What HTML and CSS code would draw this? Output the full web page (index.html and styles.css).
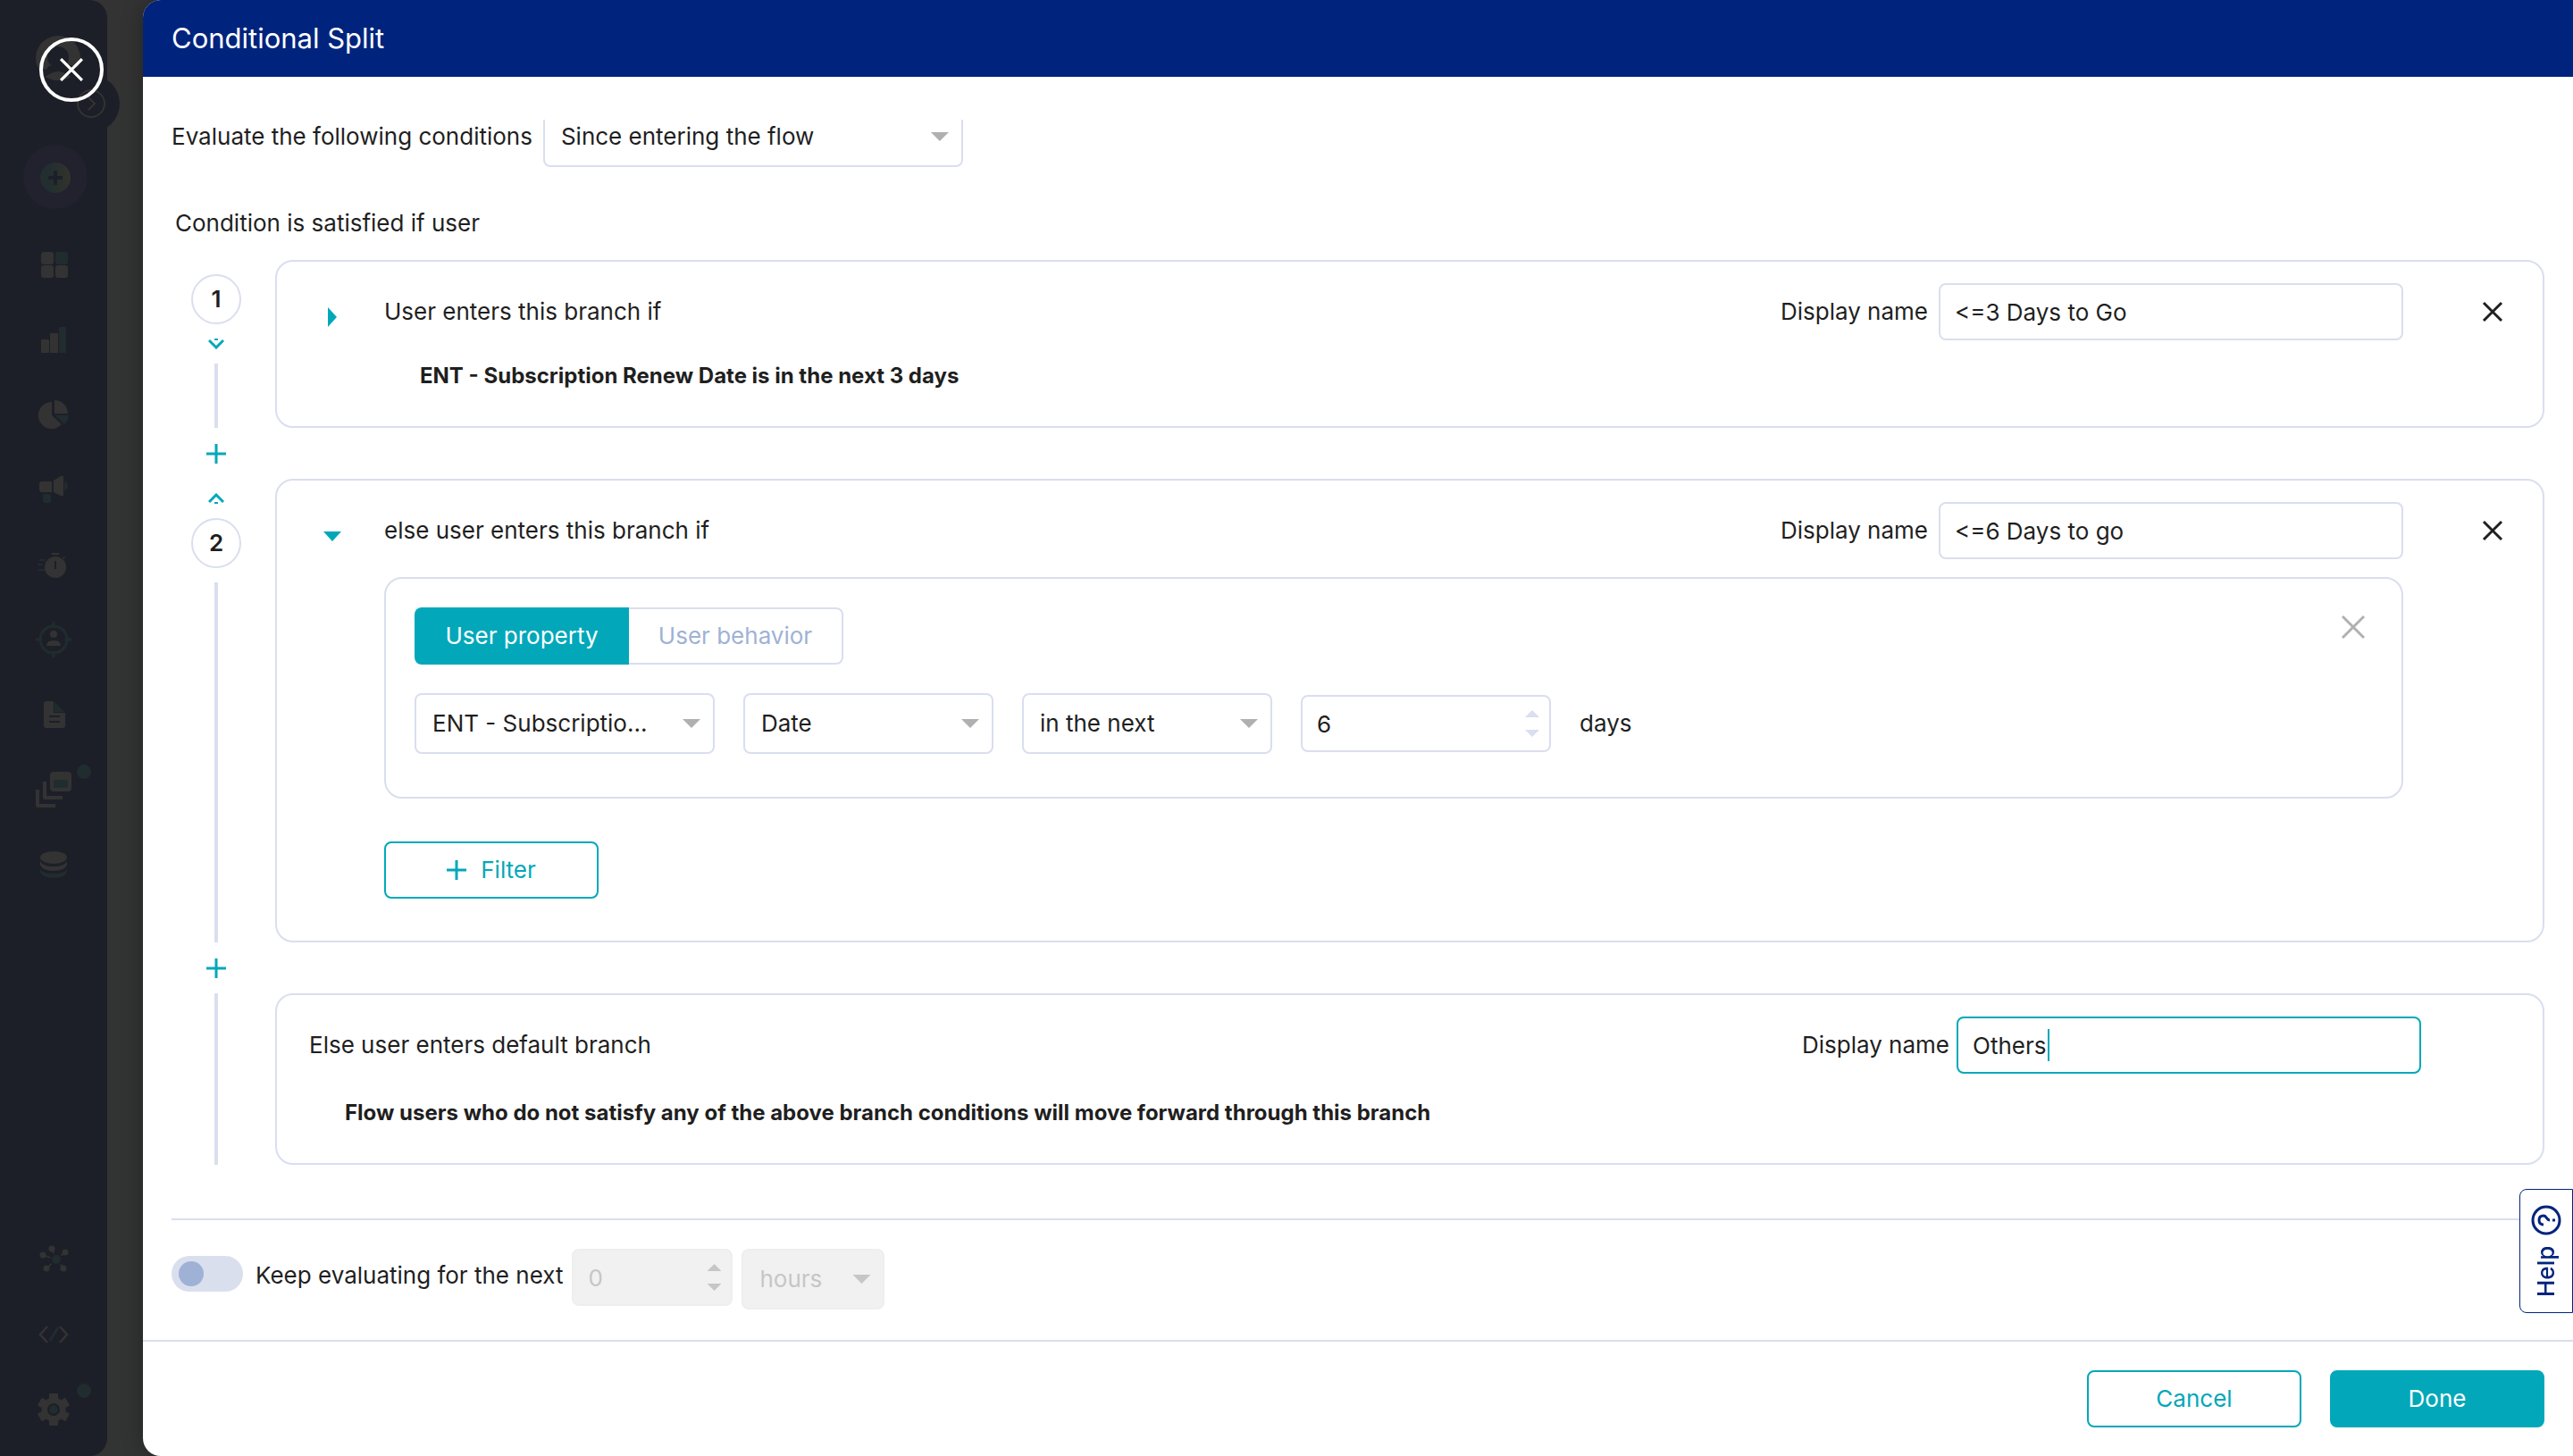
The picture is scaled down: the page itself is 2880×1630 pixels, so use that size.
FILE: index.html
```
<!DOCTYPE html>
<html lang="en">
<head>
<meta charset="UTF-8" />
<meta name="viewport" content="width=device-width, initial-scale=1" />
<title>Conditional Split</title>
<link rel="stylesheet" href="styles.css">
</head>
<body>
  <nav class="sidebar" aria-label="Main">
    <div class="brand">
      <svg viewBox="0 0 50 50"><circle class="g" cx="25" cy="25" r="25"/><circle class="d" cx="25" cy="24" r="12"/><path class="d" d="M0 37 Q10 40 14 36 L11 46 L2 42Z"/><path class="d" d="M11 46 Q25 34 39 46 Q46 42 48 36 L36 32 L14 34Z"/><path class="g" d="M11 46 Q25 36 39 46 Q25 54 11 46Z"/></svg>
    </div>
    <div class="expand">
      <svg viewBox="0 0 64 64"><circle cx="32" cy="32" r="15"/><path d="M29 25l7 7-7 7"/></svg>
    </div>
    <a href="#" class="create" aria-label="Create">
      <svg viewBox="0 0 72 72">
        <defs><linearGradient id="mix"><stop offset=".3" stop-color="#222e30"/><stop offset="1" stop-color="#32332c"/></linearGradient></defs>
        <circle cx="36" cy="36" r="36" fill="#21222e"/><circle cx="36" cy="37" r="17" fill="url(#mix)"/>
        <path d="M28 37h16M36 29v16" stroke="#1d1f28" stroke-width="4"/>
      </svg>
    </a>
    <a href="#" class="nav-item" aria-label="Overview">
      <svg viewBox="0 0 48 48"><rect class="g" x="10" y="10" width="14" height="14" rx="3"/><rect class="t" x="26" y="10" width="14" height="14" rx="3"/><rect class="g" x="10" y="25" width="14" height="14" rx="3"/><rect class="g" x="26" y="25" width="14" height="14" rx="3"/></svg>
    </a>
    <a href="#" class="nav-item" aria-label="Analytics">
      <svg viewBox="0 0 48 48"><rect class="g" x="10" y="24" width="9" height="15" rx="1"/><rect class="g" x="20" y="17" width="9" height="22" rx="1"/><rect class="t" x="30" y="10" width="8" height="29" rx="1"/></svg>
    </a>
    <a href="#" class="nav-item" aria-label="Segments">
      <svg viewBox="0 0 48 48"><path class="g" d="M22 25V10A15 15 0 1 0 33 35Z"/><path class="g" d="M25 23V8A15 15 0 0 1 40 23Z"/><path class="t" d="M26 25H41A15 15 0 0 1 36 35Z"/></svg>
    </a>
    <a href="#" class="nav-item" aria-label="Campaigns">
      <svg viewBox="0 0 48 48"><path class="g" d="M11 15H22V27H11Q8 27 8 24V18Q8 15 11 15Z"/><path class="g" d="M24 14L32 9Q35 8 35 10V30Q35 32 32 31L24 27Z"/><path class="t" d="M36 15Q40 16 40 20T36 25Z"/><rect class="t" x="12" y="29" width="9" height="10" rx="2"/></svg>
    </a>
    <a href="#" class="nav-item" aria-label="Live">
      <svg viewBox="0 0 48 48"><circle class="g" cx="26" cy="27" r="12"/><path class="g" d="M22 11h8v2h-8zM34 17l2-2 1 1-2 2z"/><path class="d" d="M25 20h2v9h-2z"/><path class="t" d="M8 18h6v2H8zM6 23h6v2H6zM7 29h7v2H7z"/></svg>
    </a>
    <a href="#" class="nav-item" aria-label="Users">
      <svg viewBox="0 0 48 48"><circle cx="24" cy="24" r="15" fill="none" stroke="#202c2e" stroke-width="3"/><path d="M24 4v7M24 37v7M4 24h7M37 24h7" stroke="#202c2e" stroke-width="3"/><circle class="g" cx="24" cy="18" r="4"/><path class="g" d="M16 31Q16 25 24 25T32 31Z"/></svg>
    </a>
    <a href="#" class="nav-item" aria-label="Reports">
      <svg viewBox="0 0 48 48"><path class="g" d="M16 9H24V22H37V36Q37 39 34 39H16Q13 39 13 36V12Q13 9 16 9Z"/><path class="t" d="M25 10L36 21H25Z"/><path class="d" d="M19 25h12v2H19zM19 31h12v2H19z"/></svg>
    </a>
    <a href="#" class="nav-item" aria-label="Catalogs">
      <svg viewBox="0 0 48 48"><rect class="g" x="20" y="4" width="24" height="22" rx="4"/><rect class="t" x="24" y="13" width="16" height="9"/><path d="M14 15V33H34M6 24V42H26" fill="none" stroke="#333" stroke-width="4" stroke-linejoin="round"/></svg>
      <span class="dot"></span>
    </a>
    <a href="#" class="nav-item" aria-label="Data">
      <svg viewBox="0 0 48 48"><ellipse class="g" cx="24" cy="16" rx="15" ry="7"/><path class="g" d="M9 20Q12 26 24 26T39 20V24Q37 31 24 31T9 24Z"/><path class="t" d="M9 29Q12 34 24 34T39 29V32Q37 39 24 39T9 32Z"/></svg>
    </a>
    <a href="#" class="nav-item nav-bottom" aria-label="Integrations">
      <svg viewBox="0 0 48 48"><path d="M12 20L27 25L22 13M37 17L27 25L16 35M27 25L35 35" fill="none" stroke="#333" stroke-width="1.5"/><circle class="d" cx="27" cy="25" r="7"/><circle class="t" cx="27" cy="25" r="5"/><circle class="g" cx="12" cy="20" r="3.5"/><circle class="g" cx="22" cy="13" r="3.5"/><circle class="g" cx="37" cy="17" r="3.5"/><circle class="g" cx="16" cy="35" r="3.5"/><circle class="g" cx="35" cy="35" r="3.5"/></svg>
    </a>
    <a href="#" class="nav-item" aria-label="Developers">
      <svg viewBox="0 0 48 48"><path d="M17 16L9 25L17 34M31 16L39 25L31 34" fill="none" stroke="#333" stroke-width="2.5"/><path d="M29 17L20 32" stroke="#202c2e" stroke-width="3"/></svg>
    </a>
    <a href="#" class="nav-item" aria-label="Settings">
      <svg viewBox="0 0 48 48"><g fill="#333"><circle cx="24" cy="25" r="13.5"/><rect id="tooth" x="19" y="7" width="10" height="36" rx="1"/><use href="#tooth" transform="rotate(60 24 25)"/><use href="#tooth" transform="rotate(120 24 25)"/></g><circle class="d" cx="24" cy="25" r="7"/><circle class="t" cx="24" cy="25" r="5"/></svg>
      <span class="dot"></span>
    </a>
  </nav>

  <button class="close" aria-label="Close">
    <svg viewBox="0 0 24 24"><path d="M1 1l22 22M23 1L1 23"/></svg>
  </button>

  <main class="panel">
    <header class="panel-header"><h1>Conditional Split</h1></header>

    <div class="panel-body">
      <div class="evaluate">
        <label for="window">Evaluate the following conditions</label>
        <span class="select select-lg"><select id="window"><option>Since entering the flow</option></select></span>
      </div>

      <p class="intro">Condition is satisfied if user</p>

      <section class="branch">
        <div class="rail">
          <span class="step">1</span>
          <button class="move" aria-label="Move down"><svg viewBox="0 0 18 12"><path d="M1 2l8 8 8-8"/><path class="dash" d="M7 1h4"/></svg></button>
          <span class="line"></span>
        </div>
        <div class="card">
          <div class="card-head">
            <button class="toggler" aria-label="Expand"><svg width="22" height="22" viewBox="0 0 22 22"><path d="M6 0l10 11-10 11z"/></svg></button>
            <h2>User enters this branch if</h2>
            <label for="name1">Display name</label>
            <input class="field name" id="name1" type="text" value="&lt;=3 Days to Go">
            <button class="remove" aria-label="Remove branch"><svg viewBox="0 0 24 24"><path d="M2 2l20 20M22 2L2 22"/></svg></button>
          </div>
          <p class="summary">ENT - Subscription Renew Date is in the next 3 days</p>
        </div>
      </section>

      <div class="connector"><button class="add" aria-label="Add branch"><svg viewBox="0 0 22 22"><path d="M11 0v22M0 11h22"/></svg></button></div>

      <section class="branch">
        <div class="rail">
          <button class="move" aria-label="Move up"><svg viewBox="0 0 18 12"><path d="M1 10l8-8 8 8"/><path class="dash" d="M7 11h4"/></svg></button>
          <span class="step">2</span>
          <span class="line"></span>
        </div>
        <div class="card">
          <div class="card-head">
            <button class="toggler" aria-label="Collapse"><svg width="22" height="22" viewBox="0 0 22 22"><path d="M1 6h20L11 17z"/></svg></button>
            <h2>else user enters this branch if</h2>
            <label for="name2">Display name</label>
            <input class="field name" id="name2" type="text" value="&lt;=6 Days to go">
            <button class="remove" aria-label="Remove branch"><svg viewBox="0 0 24 24"><path d="M2 2l20 20M22 2L2 22"/></svg></button>
          </div>
          <div class="conditions">
            <div class="filter-box">
              <div class="filter-top">
                <div class="tabs">
                  <button class="tab active">User property</button>
                  <button class="tab">User behavior</button>
                </div>
                <button class="remove-filter" aria-label="Remove filter"><svg viewBox="0 0 28 28"><path d="M2 2l24 24M26 2L2 26"/></svg></button>
              </div>
              <div class="filter-row">
                <span class="select select-md"><select aria-label="Property"><option>ENT - Subscriptio...</option></select></span>
                <span class="select"><select aria-label="Type"><option>Date</option></select></span>
                <span class="select"><select aria-label="Operator"><option>in the next</option></select></span>
                <span class="number"><input class="field" id="days" type="number" value="6"></span>
                <label for="days">days</label>
              </div>
            </div>
            <button class="btn btn-filter"><svg viewBox="0 0 22 22"><path d="M11 0v22M0 11h22"/></svg>Filter</button>
          </div>
        </div>
      </section>

      <div class="connector"><button class="add" aria-label="Add branch"><svg viewBox="0 0 22 22"><path d="M11 0v22M0 11h22"/></svg></button></div>

      <section class="branch">
        <div class="rail rail-last"><span class="line"></span></div>
        <div class="card card-default">
          <div class="card-head">
            <h2>Else user enters default branch</h2>
            <label for="name3">Display name</label>
            <span class="name-active">
              <input class="field name focused" id="name3" type="text" value="Others">
              <span class="caret"></span>
            </span>
          </div>
          <p class="summary">Flow users who do not satisfy any of the above branch conditions will move forward through this branch</p>
        </div>
      </section>

      <div class="keep">
        <input class="switch" id="keep" type="checkbox">
        <label for="keep">Keep evaluating for the next</label>
        <span class="number disabled"><input class="field" type="number" value="0" aria-label="Amount" disabled></span>
        <span class="select disabled"><select aria-label="Unit" disabled><option>hours</option></select></span>
      </div>
    </div>

    <footer class="panel-footer">
      <button class="btn">Cancel</button>
      <button class="btn btn-primary">Done</button>
    </footer>
  </main>

  <button class="help">
    <span>Help</span>
    <svg viewBox="0 0 34 34"><circle cx="17" cy="17" r="15"/><path d="M12 14Q12 9 17 9T22 14C22 18 17 17 17 21"/><path d="M17 24v3"/></svg>
  </button>
</body>
</html>
```
FILE: styles.css
```
/* Base */
* {
  box-sizing: border-box;
}
body {
  margin: 0;
  display: flex;
  min-height: 100vh;
  background: linear-gradient(#333 98px, #323433 98px);
  font-family: Inter, "Liberation Sans", sans-serif;
  font-size: 26px;
  line-height: 36px;
  color: #1f1f1f;
}
h1, h2, p {
  margin: 0;
  font-weight: 400;
}
h2 {
  font-size: 26px;
}
button, input, select {
  font: inherit;
  color: inherit;
}
button {
  padding: 0;
  border: none;
  background: none;
  cursor: pointer;
}
svg {
  display: block;
}

/* Sidebar */
.sidebar {
  position: relative;
  flex: none;
  display: flex;
  flex-direction: column;
  align-items: center;
  width: 120px;
  padding: 40px 0 11px;
  background: #1d1f28;
  border-radius: 0 20px 20px 0;
}
.g { fill: #333; }
.t { fill: #202c2e; }
.d { fill: #1d1f28; }
.brand svg {
  width: 50px;
  margin-left: 10px;
}
.expand {
  position: absolute;
  top: 84px;
  right: -14px;
  width: 64px;
  border-radius: 50%;
  background: #1d1f28;
}
.expand svg {
  fill: none;
  stroke: #333;
  stroke-width: 2;
}
.create {
  width: 72px;
  margin: 72px 0 20px 4px;
}
.nav-item {
  position: relative;
  display: flex;
  align-items: center;
  justify-content: center;
  width: 120px;
  height: 84px;
}
.nav-item svg {
  width: 48px;
}
.nav-bottom {
  margin-top: auto;
}
.dot {
  position: absolute;
  top: 14px;
  right: 18px;
  width: 16px;
  height: 16px;
  border-radius: 50%;
  background: #202c2e;
}
.close {
  position: absolute;
  top: 42px;
  left: 44px;
  display: flex;
  align-items: center;
  justify-content: center;
  width: 72px;
  height: 72px;
  border: 4px solid #fff;
  border-radius: 50%;
}
.close svg {
  width: 26px;
  stroke: #fff;
  stroke-width: 3;
}

/* Panel */
.panel {
  flex: 1;
  display: flex;
  flex-direction: column;
  min-width: 0;
  margin-left: 40px;
  background: #fff;
  border-radius: 20px 0 0 20px;
  overflow: hidden;
  box-shadow: 0 0 24px rgba(0, 0, 0, 0.3);
}
.panel-header {
  padding: 25px 32px;
  background: #00247d;
  color: #fff;
}
h1 {
  font-size: 31px;
}
.panel-body {
  flex: 1;
  margin-top: 48px;
  padding: 0 0 34px 32px;
  overflow: hidden;
}
/* the list is scrolled a little, so the first row is cut by the top edge */
.evaluate {
  display: flex;
  align-items: center;
  gap: 12px;
  margin-top: -15px;
}
.intro {
  margin: 45px 4px 23px;
}

/* Form controls */
.field, .select select {
  width: 100%;
  height: 64px;
  padding: 0 16px;
  border: 2px solid #dadeee;
  border-radius: 8px;
  background: #fff;
  outline: none;
}
.select {
  position: relative;
  flex: none;
  width: 280px;
}
.select select {
  height: 68px;
  padding: 0 18px;
  appearance: none;
  opacity: 1;
}
.select::after {
  content: "";
  position: absolute;
  top: 29px;
  right: 16px;
  width: 20px;
  height: 10px;
  background: #b0b0b0;
  clip-path: polygon(0 0, 100% 0, 50% 100%);
  pointer-events: none;
}
.select-md {
  width: 336px;
}
.select-lg {
  width: 470px;
}
.number {
  position: relative;
  flex: none;
  width: 280px;
}
.number .field {
  appearance: textfield;
}
.number::before, .number::after {
  content: "";
  position: absolute;
  top: 17px;
  right: 13px;
  width: 16px;
  height: 8px;
  background: #dadeee;
  clip-path: polygon(0 100%, 100% 100%, 50% 0);
}
.number::after {
  top: 39px;
  clip-path: polygon(0 0, 100% 0, 50% 100%);
}
.number.disabled {
  width: 180px;
}
.select.disabled {
  width: 160px;
}
.disabled .field, .disabled select {
  background: #f1f1f1;
  border-color: #eee;
  color: #c6c6c6;
}
.disabled::before, .disabled::after {
  background: #c6c6c6;
}

/* Branches */
.branch {
  display: flex;
  gap: 16px;
  padding-right: 32px;
}
.rail {
  flex: none;
  display: flex;
  flex-direction: column;
  align-items: center;
  gap: 16px;
  width: 100px;
  padding-top: 16px;
}
.rail-last {
  padding-top: 0;
}
.step {
  width: 56px;
  height: 56px;
  border: 2px solid #dadeee;
  border-radius: 50%;
  line-height: 52px;
  text-align: center;
  font-weight: 600;
}
.move svg {
  width: 18px;
  fill: none;
  stroke: #02a8b9;
  stroke-width: 3;
}
.move .dash {
  stroke-width: 2;
}
.line {
  flex: 1;
  width: 4px;
  background: #dadeee;
}
.connector {
  display: flex;
  align-items: center;
  justify-content: center;
  width: 100px;
  height: 57px;
}
.add svg, .btn-filter svg {
  width: 22px;
  stroke: #02a8b9;
  stroke-width: 3;
}
.card {
  flex: 1;
  padding: 24px 24px 38px;
  border: 2px solid #dadeee;
  border-radius: 20px;
}
.card-head {
  display: flex;
  align-items: center;
}
.card-head h2 {
  flex: 1;
}
.toggler {
  width: 76px;
  margin-right: 20px;
  padding-top: 12px;
}
.toggler svg {
  margin: 0 auto;
  fill: #02a8b9;
}
.name {
  width: 520px;
  margin-left: 12px;
}
.remove {
  width: 64px;
  margin-left: 68px;
}
.remove svg {
  width: 24px;
  margin: 0 auto;
  stroke: #1f1f1f;
  stroke-width: 3;
}
.summary {
  margin: 22px 0 0 136px;
  font-size: 24px;
  font-weight: 700;
}
.card-default {
  padding: 24px 136px 38px 36px;
}
.card-default .summary {
  margin: 26px 0 0 40px;
}
.name-active {
  position: relative;
}
.focused {
  border-color: #02a8b9;
  margin-left: 8px;
}
.caret {
  position: absolute;
  top: 14px;
  left: 110px;
  width: 2px;
  height: 36px;
  background: #02a8b9;
}

/* Filter */
.conditions {
  padding: 20px 132px 9px 96px;
}
.filter-box {
  margin-bottom: 48px;
  padding: 32px 32px 48px;
  border: 2px solid #dadeee;
  border-radius: 20px;
}
.filter-top {
  display: flex;
  align-items: flex-start;
  justify-content: space-between;
  margin-bottom: 32px;
}
.tabs {
  display: flex;
}
.tab {
  width: 240px;
  height: 64px;
  border: 2px solid #dadeee;
  border-left: none;
  border-radius: 0 8px 8px 0;
  color: #9fb2d5;
}
.tab.active {
  border: none;
  border-radius: 8px 0 0 8px;
  background: #02a8b9;
  color: #fff;
}
.remove-filter {
  width: 44px;
  height: 44px;
}
.remove-filter svg {
  width: 28px;
  margin: 0 auto;
  stroke: #b0b0b0;
  stroke-width: 3;
}
.filter-row {
  display: flex;
  align-items: center;
  gap: 32px;
}

/* Buttons */
.btn {
  display: flex;
  align-items: center;
  justify-content: center;
  gap: 16px;
  width: 240px;
  height: 64px;
  border: 2px solid #02a8b9;
  border-radius: 8px;
  color: #02a8b9;
}
.btn-primary {
  background: #02a8b9;
  color: #fff;
}

/* Keep evaluating */
.keep {
  display: flex;
  align-items: flex-start;
  gap: 10px;
  margin-top: 60px;
  padding-top: 32px;
  border-top: 2px solid #dadeee;
}
.keep label {
  line-height: 60px;
}
.switch {
  appearance: none;
  width: 80px;
  height: 40px;
  margin: 8px 4px 0 0;
  padding: 6px 8px;
  border-radius: 20px;
  background: #dadfee;
}
.switch::before {
  content: "";
  display: block;
  width: 28px;
  height: 28px;
  border-radius: 50%;
  background: #9fb2d5;
}
.panel-footer {
  display: flex;
  justify-content: flex-end;
  gap: 32px;
  padding: 32px;
  border-top: 2px solid #dadeee;
}

/* Help tab */
.help {
  position: fixed;
  right: 0;
  bottom: 160px;
  display: flex;
  align-items: center;
  justify-content: center;
  gap: 12px;
  width: 60px;
  height: 139px;
  border: 1px solid #00247d;
  border-radius: 0 8px 8px 0;
  background: #fff;
  color: #00247d;
  font-weight: 500;
  writing-mode: vertical-rl;
  transform: rotate(180deg);
}
.help svg {
  width: 34px;
  fill: none;
  stroke: #00247d;
  stroke-width: 3;
  transform: rotate(90deg);
}
```
